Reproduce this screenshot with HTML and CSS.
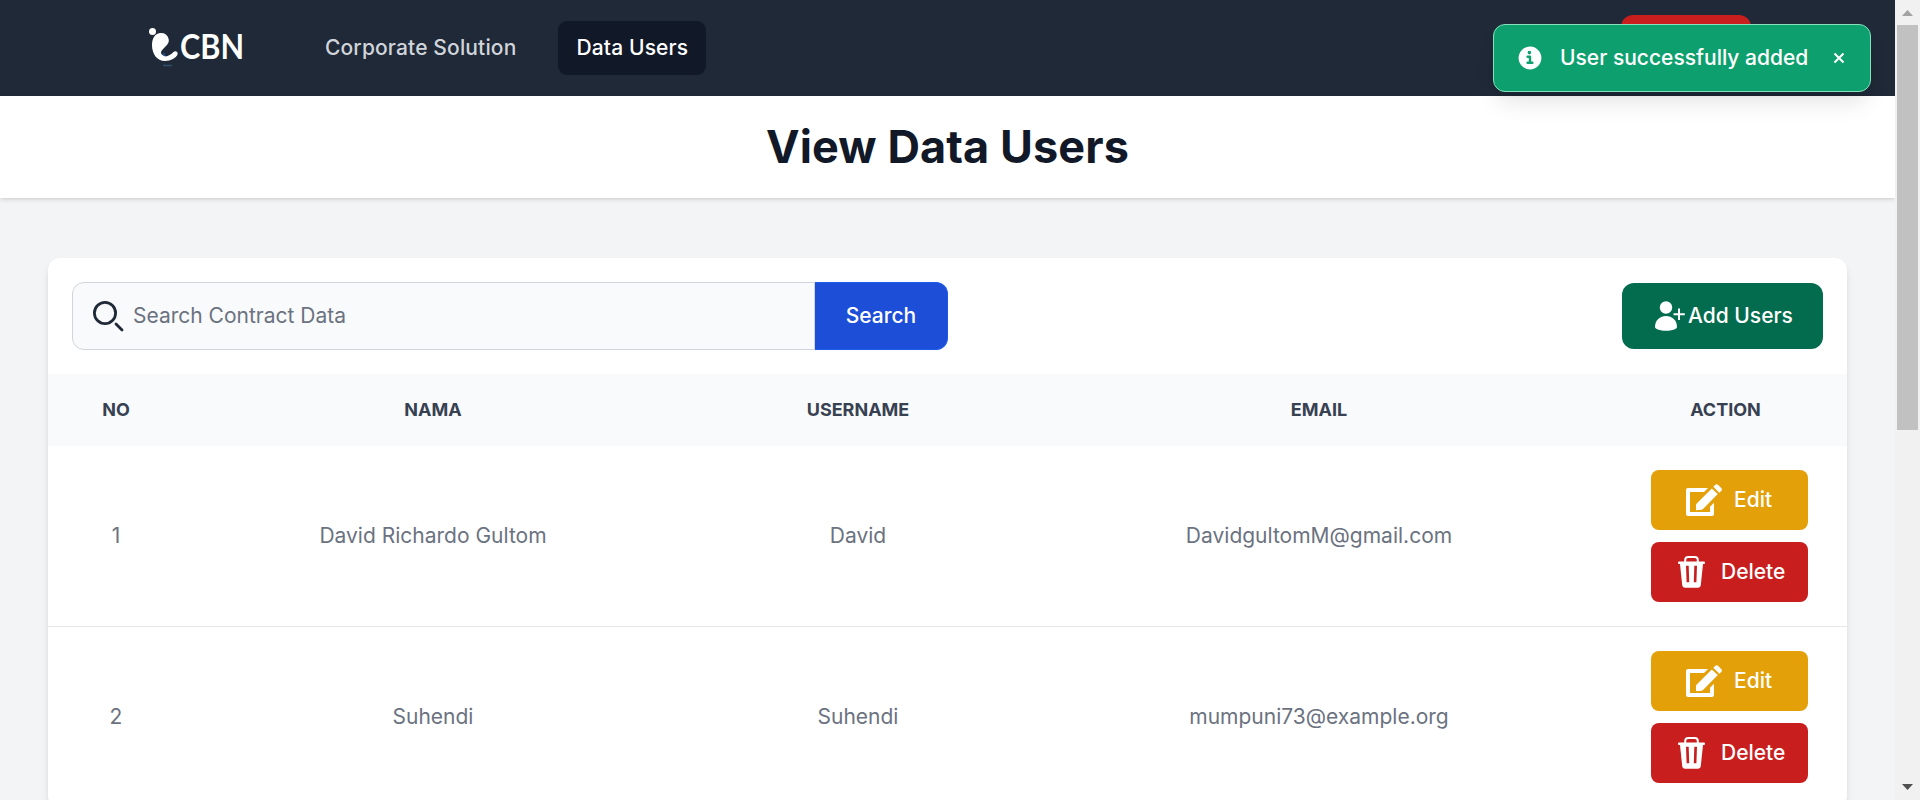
FILE: index.html
```html
<!DOCTYPE html>
<html lang="en">
<head>
<meta charset="utf-8">
<title>View Data Users</title>
<link rel="stylesheet" href="styles.css">
</head>
<body>
<svg class="sprite" aria-hidden="true">
  <symbol id="i-edit" viewBox="0 0 36 32">
    <path d="M22 4H2Q0 4 0 6v24q0 2 2 2h24q2 0 2-2V18.800l-4 4V28H4V8h14z"/>
    <path d="M25.800 4.500l6 5.600L17 25l-1.200.8-5.800.4V21l.5-1.200z"/>
    <path d="M27.300 2.800l1.900-1.900q1.500-1.500 3 0l3 3q1.500 1.500 0 3l-1.900 1.900z"/>
  </symbol>
  <symbol id="i-trash" viewBox="0 0 27 32">
    <path d="M7.200 6.500V4q0-2.900 3-2.900h6.600q3 0 3 2.900v2.500" fill="none" stroke="currentColor" stroke-width="2"/>
    <path fill-rule="evenodd" d="M1 5.500h25q1 0 1 1.200T26 8h-1l-2.200 21q-.3 2.700-3 2.700H7.200q-2.700 0-3-2.700L2 8H1Q0 8 0 6.700T1 5.500zM8 9.700l.6 16.500h2.600L10.700 9.700zM16.300 9.700l-.5 16.500h2.600L19 9.700z"/>
  </symbol>
</svg>
<div class="window">
  <div class="page">
    <nav class="nav">
      <div class="nav-left">
        <svg class="logo" viewBox="0 0 104 48">
          <circle cx="4.500" cy="7.500" r="3.500"/>
          <path d="M13 33q2 3 6 1l-3-6z" fill="#1c4a80"/>
          <path d="M13 9C7 9 4 14 4 21c0 9 5 16 13 16 6 0 11-3 12.500-6.500 1-2.500-2-4.500-4-2.500-3 3-7 5.500-9.500 4C11 29 13 27 17 23c3-3 4.500-5 3.500-8.500C19.500 11 17 9 13 9z"/>
          <path d="M15 41.500h9" stroke="#31506f" stroke-width="1.500"/>
          <text x="32" y="35" textLength="64" lengthAdjust="spacingAndGlyphs">CBN</text>
        </svg>
        <div class="links">
          <a class="link">Corporate Solution</a>
          <a class="link active">Data Users</a>
        </div>
      </div>
      <div class="logout"></div>
    </nav>
    <header class="title-bar"><h1>View Data Users</h1></header>
    <main class="main">
      <section class="card">
        <div class="toolbar">
          <div class="search">
            <div class="field">
              <svg class="search-icon" viewBox="0 0 31 31"><circle cx="12" cy="12" r="10.600" fill="none" stroke="currentColor" stroke-width="2.800"/><path d="M23 23l6 6" stroke="currentColor" stroke-width="2.800" stroke-linecap="round"/></svg>
              <span>Search Contract Data</span>
            </div>
            <div class="search-btn">Search</div>
          </div>
          <div class="add">
            <svg class="add-icon" viewBox="0 0 30 30"><circle cx="11" cy="6.500" r="6.200"/><path d="M0 26C0 19 5 15 11 15s11 4 11 11c0 2-5 3.800-11 3.800S0 28 0 26z"/><path d="M24 7.500v11.500M18.500 13.200h11.300" stroke="currentColor" stroke-width="2"/></svg>
            <span>Add Users</span>
          </div>
        </div>
        <table class="table">
          <colgroup><col class="c-no"><col class="c-name"><col class="c-user"><col class="c-mail"><col class="c-act"></colgroup>
          <thead><tr><th>NO</th><th>NAMA</th><th>USERNAME</th><th>EMAIL</th><th>ACTION</th></tr></thead>
          <tbody>
            <tr><td>1</td><td>David Richardo Gultom</td><td>David</td><td>DavidgultomM@gmail.com</td>
              <td class="actions"><div class="btn edit"><svg class="edit-icon"><use href="#i-edit"/></svg>Edit</div><div class="btn delete"><svg class="trash-icon"><use href="#i-trash"/></svg>Delete</div></td></tr>
            <tr><td>2</td><td>Suhendi</td><td>Suhendi</td><td>mumpuni73@example.org</td>
              <td class="actions"><div class="btn edit"><svg class="edit-icon"><use href="#i-edit"/></svg>Edit</div><div class="btn delete"><svg class="trash-icon"><use href="#i-trash"/></svg>Delete</div></td></tr>
          </tbody>
        </table>
      </section>
    </main>
    <div class="toast">
      <svg class="info-icon" viewBox="0 0 20 20"><path d="M10 .5a9.500 9.500 0 1 0 9.500 9.500A9.510 9.510 0 0 0 10 .5ZM9.500 4a1.500 1.500 0 1 1 0 3 1.500 1.500 0 0 1 0-3ZM12 15H8a1 1 0 0 1 0-2h1v-3H8a1 1 0 0 1 0-2h2a1 1 0 0 1 1 1v4h1a1 1 0 0 1 0 2Z"/></svg>
      <span class="toast-text">User successfully added</span>
      <svg class="close-icon" viewBox="0 0 12 12"><path d="M1.500 1.500l9 9M10.500 1.500l-9 9" stroke="currentColor" stroke-width="2"/></svg>
    </div>
  </div>
  <aside class="scrollbar">
    <svg class="arrow up" viewBox="0 0 11 6"><path d="M0 6L5.500 0 11 6z"/></svg>
    <div class="thumb"></div>
    <svg class="arrow down" viewBox="0 0 11 6"><path d="M0 0h11L5.500 6z"/></svg>
  </aside>
</div>
</body>
</html>
```

FILE: styles.css
```css
* { box-sizing: border-box; }
html { height: 800px; overflow: hidden; }
body { margin: 0; height: 800px; overflow: hidden; font-family: Inter, "Liberation Sans", sans-serif; font-size: 21px; line-height: 30px; }
svg { display: block; fill: currentColor; flex: none; }
.sprite { position: absolute; width: 0; height: 0; }
.window { display: flex; height: 800px; overflow: hidden; }
.page { position: relative; width: 1895px; height: 800px; overflow: hidden; background: #f3f4f6; }

.nav { height: 96px; background: #1f2937; display: flex; justify-content: space-between; align-items: center; padding: 0 144px 0 148px; }
.nav-left { display: flex; align-items: center; gap: 55px; }
.logo { width: 104px; height: 48px; color: #fff; }
.logo text { font-family: Lato, sans-serif; font-weight: 700; font-size: 33.5px; }
.links { display: flex; gap: 24px; }
.link { padding: 12px 18px; border-radius: 9px; font-weight: 500; letter-spacing: .14px; color: #d1d5db; }
.link.active { background: #111827; color: #fff; }
.logout { width: 130px; height: 66px; border-radius: 12px; background: #c81e1e; }

.title-bar { height: 102px; padding: 24px; background: #fff; box-shadow: 0 1.5px 4.5px rgba(0,0,0,.1), 0 1.5px 3px -1.5px rgba(0,0,0,.1); text-align: center; }
.title-bar h1 { margin: 0; font-size: 45px; line-height: 54px; font-weight: 700; letter-spacing: .1px; color: #111827; }

.main { padding: 60px 48px 0; }
.card { background: #fff; border-radius: 12px; box-shadow: 0 6px 9px -1.5px rgba(0,0,0,.1), 0 3px 6px -3px rgba(0,0,0,.1); }
.toolbar { display: flex; justify-content: space-between; align-items: center; padding: 24px; height: 116px; }
.search { display: flex; height: 68px; width: 876px; }
.field { flex: 1; display: flex; align-items: center; gap: 9px; padding-left: 20px; background: #f9fafb; border: 1px solid #d1d5db; border-radius: 12px 0 0 12px; color: #6b7280; }
.search-icon { width: 31px; height: 31px; color: #1f2937; }
.search-btn { width: 133px; display: flex; align-items: center; justify-content: center; border: 1px solid #1c5bea; border-left: 0; border-radius: 0 12px 12px 0; background: #1d4ed8; color: #fff; font-weight: 500; }
.add { display: flex; align-items: center; gap: 3px; width: 201px; height: 66px; padding-left: 33px; border-radius: 12px; background: #046c4e; color: #fff; font-weight: 500; white-space: nowrap; }
.add-icon { width: 30px; height: 30px; }

.table { width: 1799px; table-layout: fixed; border-collapse: separate; border-spacing: 0; text-align: center; color: #6b7280; }
.c-no { width: 136px; } .c-name { width: 498px; } .c-user { width: 352px; } .c-mail { width: 570px; } .c-act { width: 243px; }
th { height: 72px; padding: 0; background: #f9fafb; font-size: 18px; line-height: 24px; font-weight: 700; color: #374151; }
td { height: 181px; padding: 0; border-bottom: 1px solid #e5e7eb; }
.actions { padding: 24px 39px 24px 47px; }
.btn { width: 157px; height: 60px; border-radius: 8px; display: flex; align-items: center; color: #fff; font-weight: 500; }
.edit { padding-left: 35px; gap: 12px; background: #e3a008; }
.delete { margin-top: 12px; padding-left: 27px; gap: 16px; background: #c81e1e; }
.edit-icon { width: 36px; height: 32px; }
.trash-icon { width: 27px; height: 32px; }

.toast { position: absolute; top: 24px; right: 24px; width: 378px; height: 68px; display: flex; align-items: center; padding: 0 25px 0 24px; border: 1px solid #84e1bc; border-radius: 12px; background: #0e9f6e; color: #fff; font-weight: 500; box-shadow: 0 15px 22px -4.5px rgba(0,0,0,.1), 0 6px 9px -6px rgba(0,0,0,.1); }
.info-icon { width: 24px; height: 24px; }
.toast-text { flex: 1; padding-left: 18px; white-space: nowrap; }
.close-icon { width: 12px; height: 12px; }

.scrollbar { width: 25px; height: 800px; background: #f1f1f1; display: flex; flex-direction: column; align-items: center; padding: 10px 0; }
.arrow { width: 11px; height: 6px; }
.up { color: #a3a3a3; }
.down { color: #505050; margin-top: auto; }
.thumb { width: 21px; height: 405px; margin-top: 9px; background: #c1c1c1; }
```
